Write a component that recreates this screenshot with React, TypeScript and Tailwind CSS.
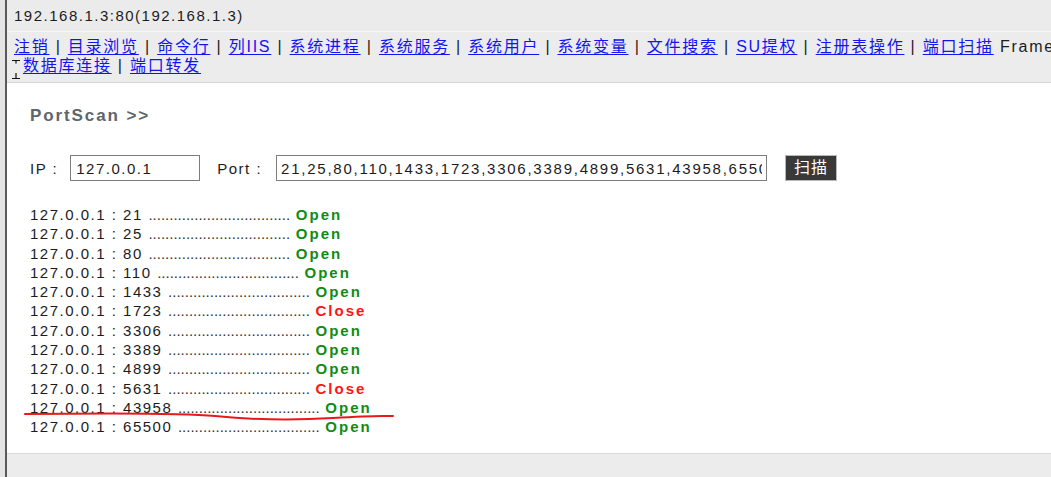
const navLinks = ['注销', '目录浏览', '命令行', '列IIS', '系统进程', '系统服务', '系统用户', '系统变量', '文件搜索', 'SU提权', '注册表操作', '端口扫描'];

const results: [string, 'Open' | 'Close'][] = [
  ['21', 'Open'],
  ['25', 'Open'],
  ['80', 'Open'],
  ['110', 'Open'],
  ['1433', 'Open'],
  ['1723', 'Close'],
  ['3306', 'Open'],
  ['3389', 'Open'],
  ['4899', 'Open'],
  ['5631', 'Close'],
  ['43958', 'Open'],
  ['65500', 'Open'],
];

const dots = '.'.repeat(34);

function NavLink({ label }: { label: string }) {
  return <a className="text-[#1414f0] underline underline-offset-[2px] decoration-[1px]">{label}</a>;
}

export default function App() {
  return (
    <div className="relative h-[477px] w-[1051px] overflow-hidden bg-[#e4e4e4] pl-[5px] font-['Liberation_Sans','Noto_Sans_CJK_SC',sans-serif] text-[15px] tracking-[1.5px] text-[#1c1c1c]">
      <div className="flex h-full flex-col border-l-2 border-[#5a5a5a]">
        {/* address bar */}
        <div className="h-[31px] shrink-0 bg-[#ebebeb] pl-[7px] leading-[31px]">192.168.1.3:80(192.168.1.3)</div>

        {/* menu */}
        <nav className="h-[52px] shrink-0 border-y border-t-[#f6f6f6] border-b-[#d6d6d6] bg-[#ececec] pl-[7px] pt-[5px] text-[16px] leading-[19px] tracking-[1.75px]">
          <div className="whitespace-nowrap">
            {navLinks.map((l, i) => (
              <span key={l}>
                {i > 0 && ' | '}
                <NavLink label={l} />
              </span>
            ))}
            <span> Frame</span>
          </div>
          <div className="whitespace-nowrap">
            <span className="mr-[3px] text-transparent">|</span>
            <NavLink label="数据库连接" /> | <NavLink label="端口转发" />
          </div>
        </nav>

        {/* content */}
        <main className="flex-1 bg-white pl-[23px] pt-[23px]">
          <h2 className="text-[17px] font-bold leading-[20px] tracking-[1.9px] text-[#5d666b]">PortScan &gt;&gt;</h2>

          <div className="mt-[29px] flex h-[26px] items-center">
            <span className="pt-[3px]">IP :</span>
            <input
              readOnly
              value="127.0.0.1"
              className="ml-[12px] h-[26px] w-[130px] border border-[#7d7d7d] bg-white px-[5px] text-[#1c1c1c] outline-none"
            />
            <span className="ml-[17px] pt-[3px]">Port :</span>
            <input
              readOnly
              value="21,25,80,110,1433,1723,3306,3389,4899,5631,43958,65500"
              className="ml-[14px] h-[26px] w-[491px] border border-[#7d7d7d] bg-white px-[4px] tracking-[1.75px] text-[#1c1c1c] outline-none"
            />
            <button className="ml-[18px] h-[26px] w-[52px] border border-[#b8b8b8] bg-[#393939] text-[16px] tracking-[1px] text-white">
              扫描
            </button>
          </div>

          <div className="mt-[24px] leading-[19.3px]">
            {results.map(([port, state]) => (
              <div key={port} className="whitespace-nowrap">
                127.0.0.1 : {port} <span className="tracking-normal text-[#333]">{dots}</span>{' '}
                <span className={state === 'Open' ? 'font-bold tracking-[2px] text-[#118b11]' : 'font-bold tracking-[2px] text-[#ff1414]'}>
                  {state}
                </span>
              </div>
            ))}
          </div>
        </main>

        <div className="h-[24px] shrink-0 border-t border-[#dadada] bg-[#ececec]" />
      </div>

      {/* text cursor caught in the shot */}
      <svg className="pointer-events-none absolute left-0 top-0" width="30" height="90" viewBox="0 0 30 90">
        <path d="M12 60.5H20M16 60.5V63.5M16 73V78.5M12 78.5H20" stroke="#111" strokeWidth="1.2" fill="none" />
      </svg>

      {/* red marker line */}
      <svg className="pointer-events-none absolute left-0 top-0" width="1051" height="477" viewBox="0 0 1051 477">
        <path
          d="M25 414 C 110 413, 185 413, 215 416 S 285 421, 333 418 S 380 416, 393 416"
          stroke="#e8181c"
          strokeWidth="2"
          fill="none"
          strokeLinecap="round"
        />
      </svg>
    </div>
  );
}
